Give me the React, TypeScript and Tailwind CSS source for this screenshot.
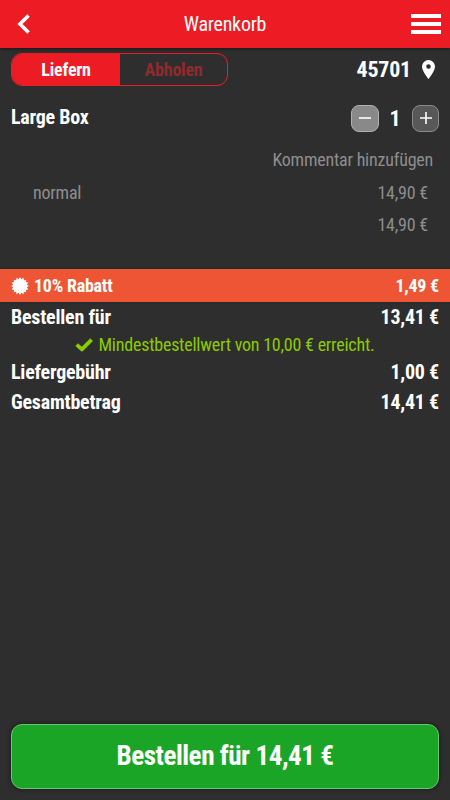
import { useState } from "react";

type SummaryRowProps = {
  label: string;
  value: string;
  className: string;
};

// 16 tips, alternating outer and inner radius
const burstPoints = Array.from({ length: 32 }, (_, i) => {
  const radius = i % 2 === 0 ? 8.9 : 7;
  const angle = (i * Math.PI) / 16;
  return `${(9 + radius * Math.sin(angle)).toFixed(2)},${(9 - radius * Math.cos(angle)).toFixed(2)}`;
}).join(" ");

export default function App() {
  const [delivery, setDelivery] = useState(true);

  return (
    <main className="flex h-[800px] w-[450px] flex-col overflow-hidden bg-[#2e2e2e] font-['Roboto_Condensed','Roboto',sans-serif] font-stretch-condensed tracking-[-0.014em] text-white">
      <Header />

      <div className="flex h-[43px] shrink-0 items-center justify-between px-[11px]">
        <div className="flex h-[33px] w-[217px] overflow-hidden rounded-[11px] border border-[#ed1c24] text-[18px] font-bold">
          <button
            type="button"
            onClick={() => setDelivery(true)}
            className={delivery ? "w-[108px] bg-[#ed1c24]" : "w-[108px] text-[#912a2d]"}
          >
            Liefern
          </button>
          <button
            type="button"
            onClick={() => setDelivery(false)}
            className={delivery ? "flex-1 text-[#912a2d]" : "flex-1 bg-[#ed1c24]"}
          >
            Abholen
          </button>
        </div>
        <div className="flex items-center text-[22px] font-bold">
          <span>45701</span>
          <svg viewBox="0 0 13 19" className="mr-[4px] ml-[11px] h-[19px] w-[13px]" fill="currentColor">
            <path
              fillRule="evenodd"
              d="M6.5 0A6.5 6.5 0 0 0 0 6.5C0 11.4 6.5 19 6.5 19S13 11.4 13 6.5A6.5 6.5 0 0 0 6.5 0Zm0 4.2a2.3 2.3 0 1 1 0 4.6 2.3 2.3 0 0 1 0-4.6Z"
            />
          </svg>
        </div>
      </div>

      <CartItem />

      <section className="mt-[30px]">
        <div className="flex h-[33px] items-center justify-between bg-[#ee5534] px-[11px] text-[18px] font-bold shadow-[0_0_2px_#0f3033]">
          <span className="flex items-center gap-[5px]">
            <svg viewBox="0 0 18 18" className="size-[18px]" fill="currentColor">
              <polygon points={burstPoints} />
            </svg>
            10% Rabatt
          </span>
          <span>1,49 €</span>
        </div>
        <SummaryRow label="Bestellen für" value="13,41 €" className="h-[30px]" />
        <p className="flex h-[25px] items-center justify-center gap-[5px] text-[18px] text-[#8ccb00]">
          <svg
            viewBox="0 0 18 14"
            className="h-[14px] w-[18px]"
            fill="none"
            stroke="currentColor"
            strokeWidth="3.8"
            strokeLinejoin="round"
          >
            <path d="M1.7 6.6 6.9 11.4 16.6 1.7" />
          </svg>
          Mindestbestellwert von 10,00 € erreicht.
        </p>
        <SummaryRow label="Liefergebühr" value="1,00 €" className="h-[30px]" />
        <SummaryRow label="Gesamtbetrag" value="14,41 €" className="h-[29px]" />
      </section>

      <button
        type="button"
        className="mx-[11px] mt-auto mb-[11px] h-[65px] shrink-0 rounded-[11px] border border-[#6cc373] bg-[#1ba526] text-[27.2px] font-bold tracking-[-0.018em] shadow-[0_0_4px_#171717]"
      >
        Bestellen für 14,41 €
      </button>
    </main>
  );
}

function Header() {
  return (
    <header className="flex h-[48px] shrink-0 items-center justify-between bg-[#ed1c24] pr-[9px] pl-[17px] shadow-[0_1px_3px_#171717]">
      <button type="button" aria-label="Zurück" className="w-[22px]">
        <svg viewBox="0 0 13 20" className="h-[20px] w-[13px]" fill="none" stroke="currentColor" strokeWidth="3.6">
          <path d="M11.5 1.5 3 10l8.5 8.5" />
        </svg>
      </button>
      <h1 className="text-[20px]">Warenkorb</h1>
      <button type="button" aria-label="Menü" className="flex w-[30px] flex-col gap-[4px]">
        <span className="h-[4px] bg-white" />
        <span className="h-[4px] bg-white" />
        <span className="h-[4px] bg-white" />
      </button>
    </header>
  );
}

function CartItem() {
  const [count, setCount] = useState(1);

  return (
    <section className="text-[18px] text-[#8d8d8d]">
      <div className="flex h-[53px] items-center justify-between px-[11px] text-white">
        <h2 className="pb-[2px] text-[20px] font-bold">Large Box</h2>
        <div className="flex items-center pt-px">
          <button
            type="button"
            aria-label="Weniger"
            onClick={() => setCount(Math.max(0, count - 1))}
            className="flex h-[27px] w-[28px] items-center justify-center rounded-[8px] border border-[#b0b0b0] bg-[#898989]"
          >
            <svg viewBox="0 0 12 12" className="size-[12px]" stroke="currentColor" strokeWidth="1.6">
              <path d="M0 6h12" />
            </svg>
          </button>
          <span className="w-[33px] pr-[1px] text-center text-[22px] font-bold">{count}</span>
          <button
            type="button"
            aria-label="Mehr"
            onClick={() => setCount(count + 1)}
            className="flex size-[27px] items-center justify-center rounded-[8px] border border-[#8b8b8b] bg-[#585858]"
          >
            <svg viewBox="0 0 12 12" className="size-[12px]" stroke="currentColor" strokeWidth="1.6">
              <path d="M6 0v12M0 6h12" />
            </svg>
          </button>
        </div>
      </div>
      <p className="flex h-[31px] items-center justify-end pr-[17px]">Kommentar hinzufügen</p>
      <div className="flex h-[34px] items-center justify-between pr-[22px] pl-[33px]">
        <span>normal</span>
        <span>14,90 €</span>
      </div>
      <p className="flex h-[30px] items-center justify-end pr-[22px]">14,90 €</p>
    </section>
  );
}

function SummaryRow({ label, value, className }: SummaryRowProps) {
  return (
    <div className={`flex items-center justify-between px-[11px] text-[20px] font-bold ${className}`}>
      <span>{label}</span>
      <span>{value}</span>
    </div>
  );
}
